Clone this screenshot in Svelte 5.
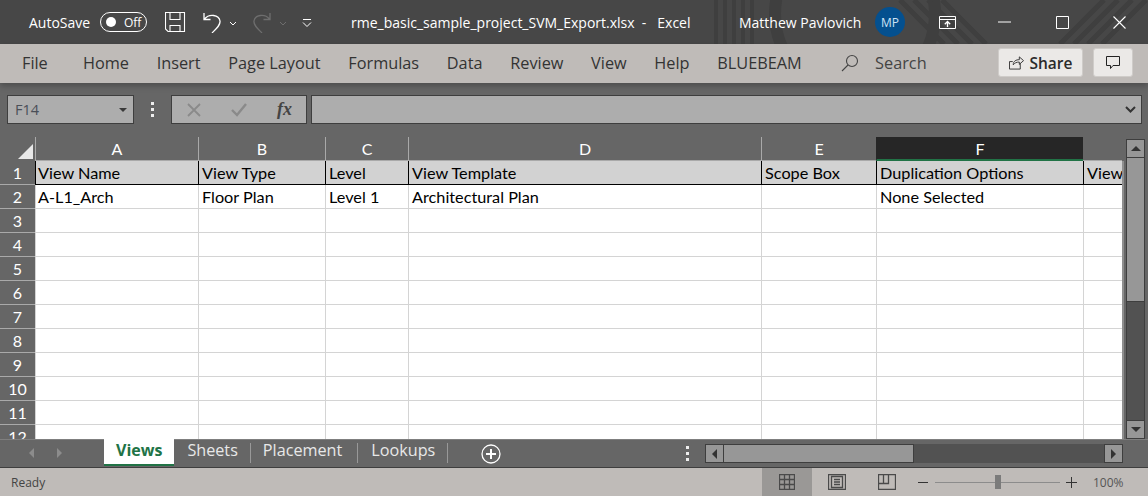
<script>
  const tabs = ['File', 'Home', 'Insert', 'Page Layout', 'Formulas', 'Data', 'Review', 'View', 'Help', 'BLUEBEAM'];
  const cols = [
    { id: 'A', w: 163 },
    { id: 'B', w: 127 },
    { id: 'C', w: 83 },
    { id: 'D', w: 353 },
    { id: 'E', w: 115 },
    { id: 'F', w: 207 },
    { id: '', w: 39 }
  ];
  const head = ['View Name', 'View Type', 'Level', 'View Template', 'Scope Box', 'Duplication Options', 'View'];
  const first = ['A-L1_Arch', 'Floor Plan', 'Level 1', 'Architectural Plan', '', 'None Selected', ''];
  const rows = [3, 4, 5, 6, 7, 8, 9, 10, 11, 12];
</script>

<div class="window">
  <header class="titlebar">
    <!-- faint Office backdrop -->
    <svg class="backdrop" width="1148" height="44" viewBox="0 0 1148 44" fill="none" stroke="#3f3f3f">
      <path d="M716 0v44M725 0v44M734 0v44M743 0v44M752 0v44" stroke-width="4" />
      <circle cx="855" cy="14" r="80" stroke-width="12" />
      <path d="M900 0l44 44M914 0l44 44M928 0l44 44M942 0l44 44" stroke-width="5" />
      <path d="M1060 44l44-44M1074 44l44-44M1088 44l44-44M1102 44l44-44" stroke-width="5" />
    </svg>
    <span class="autosave">AutoSave</span>
    <span class="toggle"><i></i><b>Off</b></span>
    <svg class="save" width="21" height="21" viewBox="0 0 21 21" fill="none" stroke="#fff" stroke-width="1.1">
      <path d="M.5.500h19v19H3l-2.500-2.500z" />
      <path d="M5 .5v7h10v-7M5 19.500v-6h10v6" />
    </svg>
    <svg class="undo" width="20" height="21" viewBox="0 0 20 21" fill="none" stroke="#fff" stroke-width="1.3">
      <path d="M2 1v6.500h6.500M2.500 7C7 1.500 17 2.500 18 9c.5 4-3 7-8 12" />
    </svg>
    <svg class="chev" width="8" height="5" viewBox="0 0 8 5" fill="none" stroke="#fff"><path d="M1 1l3 3 3-3" /></svg>
    <svg class="redo" width="20" height="21" viewBox="0 0 20 21" fill="none" stroke="#6e6e6e" stroke-width="1.3">
      <path d="M18 1v6.500h-6.500M17.500 7C13 1.500 3 2.500 2 9c-.5 4 3 7 8 12" />
    </svg>
    <svg class="chev" width="8" height="5" viewBox="0 0 8 5" fill="none" stroke="#6e6e6e"><path d="M1 1l3 3 3-3" /></svg>
    <svg class="qat" width="10" height="9" viewBox="0 0 10 9" fill="none" stroke="#fff"><path d="M1 .5h8M1 3.500l4 4 4-4" /></svg>
    <span class="doc">rme_basic_sample_project_SVM_Export.xlsx &nbsp;-&nbsp;&nbsp; Excel</span>
    <span class="user">Matthew Pavlovich</span>
    <span class="avatar">MP</span>
    <svg class="ctl-display" width="17" height="13" viewBox="0 0 17 13" fill="none" stroke="#fff">
      <path d="M.5 3.500h16M.5.500h16v12H.5z" /><path d="M8.500 11V5.500M5.800 8.200l2.700-2.700 2.700 2.700" stroke-width="1.300" />
    </svg>
    <svg class="ctl-min" width="13" height="2" viewBox="0 0 13 2"><path d="M0 1h13" stroke="#fff" /></svg>
    <svg class="ctl-max" width="13" height="13" viewBox="0 0 13 13" fill="none" stroke="#fff"><path d="M.5.500h12v12H.5z" /></svg>
    <svg class="ctl-close" width="13" height="13" viewBox="0 0 13 13" fill="none" stroke="#fff" stroke-width="1.100"><path d="M.5.500l12 12M12.500.500l-12 12" /></svg>
  </header>

  <nav class="ribbon">
    {#each tabs as t}
      <span class="rtab" class:file={t === 'File'}>{t}</span>
    {/each}
    <svg class="lens" width="18" height="18" viewBox="0 0 18 18" fill="none" stroke="#444" stroke-width="1.100">
      <circle cx="11" cy="7" r="5.500" /><path d="M7 11l-6 6" />
    </svg>
    <span class="search">Search</span>
    <button class="share">
      <svg width="15" height="15" viewBox="0 0 16 15" fill="none" stroke="#333">
        <path d="M12 8.500v6H.5v-8h3.500" /><path d="M4.500 10c0-4 3-5.500 6.500-5.500V1.500l4.500 4-4.500 4V7C8 7 6 8 4.500 10z" />
      </svg>
      Share
    </button>
    <button class="comment">
      <svg width="14" height="14" viewBox="0 0 14 14" fill="none" stroke="#222">
        <path d="M.5.500h13v9H7l-2.500 3v-3h-4z" />
      </svg>
    </button>
  </nav>

  <div class="formula">
    <div class="namebox"><span>F14</span><i class="caret"></i></div>
    <div class="dots"><i></i><i></i><i></i></div>
    <div class="fbtns">
      <svg width="14" height="14" viewBox="0 0 14 14" fill="none" stroke="#8a8a8a" stroke-width="1.800"><path d="M1 1l12 12M13 1L1 13" /></svg>
      <svg width="16" height="14" viewBox="0 0 16 14" fill="none" stroke="#8a8a8a" stroke-width="2.400"><path d="M1 7l5 5 9-11" /></svg>
      <span class="fx">fx</span>
    </div>
    <div class="fbar">
      <svg width="11" height="7" viewBox="0 0 11 7" fill="none" stroke="#333" stroke-width="2"><path d="M1 1l4.500 4.500L10 1" /></svg>
    </div>
  </div>

  <div class="middle">
    <div class="sheet">
      <div class="colhead">
        <div class="corner"><i></i></div>
        {#each cols as c, i}
          <div class="ch" class:sel={c.id === 'F'} class:last={i === cols.length - 1} style="width:{c.w}px">{c.id}</div>
        {/each}
      </div>
      <div class="row">
        <div class="rh">1</div>
        {#each cols as c, i}
          <div class="cell hd" style="width:{c.w}px">{head[i]}</div>
        {/each}
      </div>
      <div class="row">
        <div class="rh">2</div>
        {#each cols as c, i}
          <div class="cell" style="width:{c.w}px">{first[i]}</div>
        {/each}
      </div>
      {#each rows as r}
        <div class="row">
          <div class="rh">{r}</div>
          {#each cols as c}
            <div class="cell" style="width:{c.w}px"></div>
          {/each}
        </div>
      {/each}
    </div>
    <div class="vscroll">
      <div class="sbtn"><i class="up"></i></div>
      <div class="vthumb"></div>
      <div class="vtrack"></div>
      <div class="sbtn"><i class="down"></i></div>
    </div>
  </div>

  <div class="tabbar">
    <div class="tabnav"><i class="tl"></i><i class="tr"></i></div>
    <span class="stab active">Views</span>
    <span class="stab sheets">Sheets</span>
    <span class="stab place">Placement</span>
    <span class="stab look">Lookups</span>
    <svg class="plus" width="20" height="20" viewBox="0 0 20 20" fill="none" stroke="#fff">
      <circle cx="10" cy="10" r="9" stroke-width="1.300" /><path d="M10 5v10M5 10h10" stroke-width="2" />
    </svg>
    <div class="dots tabdots"><i></i><i></i><i></i></div>
    <div class="hscroll">
      <div class="hbtn"><i class="left"></i></div>
      <div class="hthumb"></div>
      <div class="htrack"></div>
      <div class="hbtn"><i class="right"></i></div>
    </div>
  </div>

  <footer class="status">
    <span class="ready">Ready</span>
    <div class="view on">
      <svg width="16" height="16" viewBox="0 0 16 16" fill="none" stroke="#4a4a4a" stroke-width="1.300"><path d="M.5.500h15v15H.5zM5.500.500v15M10.500.500v15M.5 5.500h15M.5 10.500h15" /></svg>
    </div>
    <div class="view">
      <svg width="18" height="16" viewBox="0 0 18 16" fill="none" stroke="#4a4a4a" stroke-width="1.300"><path d="M.5.500h17v15H.5zM3.500 2.500h11v11h-11zM6 5.500h6M6 8h6M6 10.500h6" /></svg>
    </div>
    <div class="view">
      <svg width="18" height="16" viewBox="0 0 18 16" fill="none" stroke="#4a4a4a" stroke-width="1.300"><path d="M.5.500h17v15H.5zM.5 9.500h10V.500M5.500.500v9" /></svg>
    </div>
    <span class="zminus"></span>
    <div class="zslide"><i></i></div>
    <span class="zplus"></span>
    <span class="pct">100%</span>
  </footer>
</div>

<style>
  :global(body) {
    margin: 0;
    overflow: hidden;
    background: #666;
  }

  .window {
    width: 1148px;
    height: 496px;
    display: flex;
    flex-direction: column;
    font-family: "Open Sans", "Noto Sans", sans-serif;
    overflow: hidden;
  }

  .titlebar {
    height: 44px;
    flex: none;
    background: #474747;
    color: #fff;
    display: flex;
    align-items: center;
    font-size: 14px;
    position: relative;
    isolation: isolate;
  }
  .backdrop {
    position: absolute;
    left: 0;
    top: 0;
    z-index: -1;
  }
  .autosave {
    margin-left: 29px;
    width: 62px;
    white-space: nowrap;
  }
  .toggle {
    margin-left: 9px;
    width: 45px;
    height: 18px;
    border: 1px solid #fff;
    border-radius: 10px;
    display: flex;
    align-items: center;
    box-sizing: content-box;
  }
  .toggle i {
    width: 10px;
    height: 10px;
    background: #fff;
    border-radius: 50%;
    margin-left: 5px;
  }
  .toggle b {
    font-weight: 400;
    font-size: 12px;
    margin-left: 8px;
  }
  .save {
    margin-left: 18px;
  }
  .undo {
    margin-left: 16px;
  }
  .chev {
    margin-left: 7px;
    margin-top: 2px;
  }
  .redo {
    margin-left: 15px;
  }
  .qat {
    margin-left: 15px;
    margin-top: 2px;
  }
  .doc {
    margin-left: 39px;
    width: 388px;
    white-space: nowrap;
    font-size: 14px;
  }
  .user {
    white-space: nowrap;
    font-size: 14px;
    width: 136px;
  }
  .avatar {
    width: 30px;
    height: 30px;
    border-radius: 50%;
    background: #04508f;
    color: #cfe3f5;
    font-size: 12px;
    display: flex;
    align-items: center;
    justify-content: center;
    margin-right: 34px;
  }
  .ctl-min {
    margin-left: 42px;
  }
  .ctl-max {
    margin-left: 45px;
  }
  .ctl-close {
    margin-left: 44px;
  }

  .ribbon {
    height: 39px;
    flex: none;
    background: #bfbbb8;
    color: #333;
    display: flex;
    align-items: center;
    font-size: 16.300px;
    padding: 0 15px 2px 22px;
    gap: 27.700px;
    box-sizing: border-box;
    position: relative;
    z-index: 1;
    box-shadow: 0 3px 6px rgba(0, 0, 0, 0.25);
  }
  .rtab {
    white-space: nowrap;
  }
  .rtab.file {
    margin-right: 7.500px;
  }
  .lens {
    margin-left: 12px;
    margin-right: -12px;
  }
  .search {
    color: #444;
  }
  .share {
    margin-left: auto;
    width: 85px;
    height: 29px;
    background: #ebe9e7;
    border: 1px solid #cfccc9;
    border-radius: 3px;
    font: 600 15.500px "Open Sans", sans-serif;
    color: #2b2b2b;
    display: flex;
    align-items: center;
    justify-content: center;
    gap: 6px;
    padding: 0;
  }
  .comment {
    margin: 0 0 0 -17.700px;
    width: 40px;
    height: 29px;
    background: #ebe9e7;
    border: 1px solid #cfccc9;
    border-radius: 3px;
    padding: 0;
    display: flex;
    align-items: center;
    justify-content: center;
  }

  .formula {
    height: 54px;
    flex: none;
    background: #666;
    display: flex;
    align-items: flex-start;
    padding: 12px 6px 0 7px;
    box-sizing: border-box;
  }
  .namebox,
  .fbtns,
  .fbar {
    height: 29px;
    box-sizing: border-box;
    background: #adadad;
    border: 1px solid #3e3e3e;
    display: flex;
    align-items: center;
  }
  .namebox {
    width: 127px;
    padding: 0 6px 0 7px;
    justify-content: space-between;
    color: #4a4f58;
    font-size: 14.500px;
  }
  .caret {
    width: 0;
    height: 0;
    border: 4px solid transparent;
    border-top-color: #3a3a3a;
    border-bottom: 0;
  }
  .dots {
    width: 37px;
    height: 29px;
    display: flex;
    flex-direction: column;
    align-items: center;
    justify-content: center;
    gap: 3px;
  }
  .dots i {
    width: 3px;
    height: 3px;
    background: #eee;
  }
  .fbtns {
    width: 136px;
    margin-right: 4px;
    padding-left: 15px;
    gap: 30px;
  }
  .fx {
    font: italic 700 18px "Liberation Serif", serif;
    color: #444;
  }
  .fbar {
    flex: 1;
    justify-content: flex-end;
    padding-right: 5px;
  }

  .middle {
    height: 302px;
    flex: none;
    display: flex;
  }
  .sheet {
    width: 1124px;
    flex: none;
    overflow: hidden;
  }
  .colhead {
    height: 24px;
    display: flex;
    background: #666;
  }
  .corner {
    width: 35px;
    flex: none;
    position: relative;
  }
  .corner i {
    position: absolute;
    right: 2px;
    bottom: 2px;
    width: 0;
    height: 0;
    border-style: solid;
    border-width: 0 0 15px 15px;
    border-color: transparent transparent #e8e8e8 transparent;
  }
  .ch {
    flex: none;
    box-sizing: border-box;
    color: #fff;
    font: 16px/24px Lato, sans-serif;
    text-align: center;
    border-left: 1px solid #a9a9a9;
    border-bottom: 1px solid #a9a9a9;
  }
  .ch.sel {
    background: #262626;
    border-left-color: #262626;
    border-bottom: 2px solid #217346;
  }
  .ch.last {
    border-left: 0;
  }
  .row {
    height: 24px;
    display: flex;
    box-sizing: border-box;
    border-right: 2px solid #8f8f8f;
  }
  .rh {
    width: 35px;
    flex: none;
    box-sizing: border-box;
    background: #666;
    color: #fff;
    font: 16px/24px Lato, sans-serif;
    text-align: center;
    border-bottom: 1px solid #a9a9a9;
  }
  .cell {
    flex: none;
    box-sizing: border-box;
    background: #fff;
    border-left: 1px solid #d4d4d4;
    border-bottom: 1px solid #d4d4d4;
    font: 16.250px/24px Lato, sans-serif;
    color: #000;
    padding-left: 3px;
    white-space: nowrap;
    overflow: hidden;
  }
  .rh + .cell {
    padding-left: 2px;
  }
  .cell.hd {
    background: #d2d2d2;
    border-left-color: #000;
    border-bottom-color: #000;
  }

  .vscroll {
    width: 24px;
    flex: none;
    background: #666;
    padding: 2px 3px 0 2px;
    box-sizing: border-box;
    display: flex;
    flex-direction: column;
  }
  .vthumb {
    height: 144px;
    background: #979797;
    border: 1px solid #3e3e3e;
    border-top: 0;
    box-sizing: border-box;
  }
  .vtrack {
    flex: 1;
    background: #525252;
    border-left: 1px solid #3e3e3e;
    border-right: 1px solid #3e3e3e;
  }
  .sbtn {
    height: 19px;
    flex: none;
    background: #979797;
    border: 1px solid #3e3e3e;
    box-sizing: border-box;
    display: flex;
    align-items: center;
    justify-content: center;
  }
  .up,
  .down {
    width: 0;
    height: 0;
    border: 5px solid transparent;
  }
  .up {
    border-bottom: 5px solid #333;
    border-top: 0;
  }
  .down {
    border-top: 5px solid #333;
    border-bottom: 0;
  }

  .tabbar {
    height: 29px;
    flex: none;
    background: #666;
    border-bottom: 1px solid #3e3e3e;
    box-sizing: border-box;
    display: flex;
    align-items: flex-start;
    position: relative;
    font-size: 16.200px;
    color: #e8e8e8;
    box-shadow: inset 0 1px #7f7f7f;
  }
  .tabnav {
    width: 104px;
    flex: none;
    height: 27px;
    display: flex;
    align-items: center;
    gap: 23px;
    padding-left: 29px;
    box-sizing: border-box;
  }
  .tl,
  .tr {
    width: 0;
    height: 0;
    border: 5px solid transparent;
    border-left-width: 0;
    border-right: 5px solid #8c8c8c;
  }
  .tr {
    border-right-width: 0;
    border-left: 5px solid #8c8c8c;
    border-left-width: 5px;
  }
  .stab {
    height: 20px;
    margin-top: 4px;
    line-height: 15px;
    border-right: 1px solid #999;
    white-space: nowrap;
    box-sizing: content-box;
  }
  .stab.sheets {
    padding: 0 12px 0 13px;
  }
  .stab.place {
    padding: 0 15px 0 12px;
  }
  .stab.look {
    padding: 0 12px 0 13px;
  }
  .stab.active {
    margin-top: 0;
    height: 25px;
    line-height: 22px;
    background: #fff;
    color: #217346;
    font-size: 16px;
    font-weight: 700;
    border: 0;
    border-bottom: 2px solid #217346;
    padding: 0 12px;
  }
  .plus {
    position: absolute;
    left: 481px;
    top: 5px;
  }
  .tabdots {
    position: absolute;
    left: 669px;
    top: 0;
    height: 28px;
  }
  .hscroll {
    position: absolute;
    left: 705px;
    top: 5px;
    width: 418px;
    height: 19px;
    display: flex;
  }
  .hbtn {
    width: 19px;
    flex: none;
    background: #979797;
    border: 1px solid #3e3e3e;
    box-sizing: border-box;
    display: flex;
    align-items: center;
    justify-content: center;
  }
  .left {
    border-top: 5px solid transparent;
    border-bottom: 5px solid transparent;
    border-right: 5px solid #333;
  }
  .right {
    border-top: 5px solid transparent;
    border-bottom: 5px solid transparent;
    border-left: 5px solid #333;
  }
  .hthumb {
    width: 190px;
    flex: none;
    background: #979797;
    border: 1px solid #3e3e3e;
    border-left: 0;
    box-sizing: border-box;
  }
  .htrack {
    flex: 1;
    background: #525252;
  }

  .status {
    flex: 1;
    background: #bfbbb8;
    display: flex;
    align-items: center;
    color: #444;
    font-size: 12px;
  }
  .ready {
    margin-left: 11px;
    width: 751px;
  }
  .view {
    width: 50px;
    height: 100%;
    display: flex;
    align-items: center;
    justify-content: center;
  }
  .view.on {
    background: #9a9896;
  }
  .zminus {
    width: 10px;
    height: 1px;
    background: #333;
    margin-left: 6px;
  }
  .zslide {
    margin-left: 7px;
    width: 125px;
    height: 1px;
    background: #8c8c8c;
    position: relative;
  }
  .zslide i {
    position: absolute;
    left: 60px;
    top: -7px;
    width: 6px;
    height: 14px;
    background: #7b7b7b;
  }
  .zplus {
    width: 11px;
    height: 1px;
    background: #333;
    margin-left: 6px;
    position: relative;
  }
  .zplus::after {
    content: "";
    position: absolute;
    left: 5px;
    top: -5px;
    width: 1px;
    height: 11px;
    background: #333;
  }
  .pct {
    margin-left: 16px;
    color: #555;
  }
</style>
